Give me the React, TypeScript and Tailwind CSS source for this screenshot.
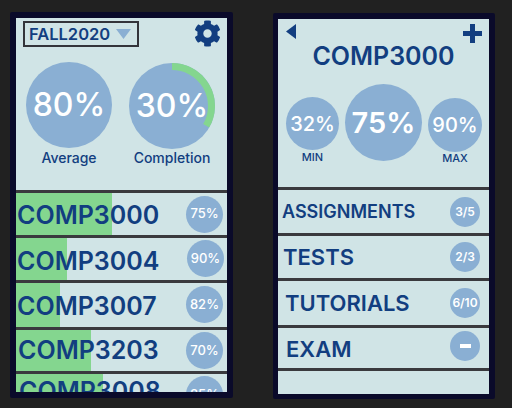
import { FaCog } from "react-icons/fa";

const font = "font-['Inter','Liberation_Sans',sans-serif]";

const courses = [
  { name: "COMP3000", pct: "75%", green: "w-[96px]", h: "h-[42px]", pl: "pl-[1px]", nudge: "pt-[2px]", cm: "mb-0", pr: "pr-[4px]" },
  { name: "COMP3004", pct: "90%", green: "w-[51px]", h: "h-[42px]", pl: "pl-[1px]", nudge: "pt-[4px]", cm: "mb-[1px]", pr: "pr-[3px]" },
  { name: "COMP3007", pct: "82%", green: "w-[44px]", h: "h-[44px]", pl: "pl-[1px]", nudge: "pt-[2px]", cm: "mb-[1px]", pr: "pr-[4px]" },
  { name: "COMP3203", pct: "70%", green: "w-[75px]", h: "h-[41px]", pl: "pl-[2px]", nudge: "pt-0", cm: "mb-0", pr: "pr-[4px]" },
];

const parts = [
  { name: "ASSIGNMENTS", val: "3/5", text: "text-[18px]", h: "h-[43px]", pl: "pl-[4px]", cm: "mt-0", nudge: "pt-0" },
  { name: "TESTS", val: "2/3", text: "text-[22px]", h: "h-[42px]", pl: "pl-[5px]", cm: "mt-0", nudge: "pt-0" },
  { name: "TUTORIALS", val: "6/10", text: "text-[22px]", h: "h-[44px]", pl: "pl-[7px]", cm: "mt-0", nudge: "pb-[1px]" },
  { name: "EXAM", val: "", text: "text-[22px]", h: "h-[40px]", pl: "pl-[8px]", cm: "-mt-[4px]", nudge: "pt-[1px]" },
];

function Circle({ size, text, children }: { size: string; text: string; children: React.ReactNode }) {
  return (
    <div className={`${size} ${text} rounded-full bg-[#8aafd3] text-white flex items-center justify-center shrink-0`}>
      {children}
    </div>
  );
}

export default function App() {
  return (
    <div className={`${font} w-[512px] h-[408px] overflow-hidden bg-[#212121] flex items-start pl-[10px] pt-[12px]`}>
      {/* left phone */}
      <div className="w-[223px] h-[386px] rounded-[2px] bg-[#0a0a2a] px-[6px] pt-[6px]">
        <div className="w-[211px] h-[374px] bg-[#d0e4e6] overflow-hidden flex flex-col">
          <div className="flex items-start justify-between pl-[7px] pr-[6px] pt-[3px] h-[44px]">
            <div className="w-[116px] h-[26px] border-2 border-[#33343a] flex items-center pl-[4px] gap-[6px]">
              <span className="text-[16.5px] leading-none font-semibold text-[#123e80]">FALL2020</span>
              <svg width="15" height="10" viewBox="0 0 15 10"><path d="M0 0H15L7.5 10Z" fill="#8aafd3" /></svg>
            </div>
            <FaCog className="text-[27px] text-[#123e80] mt-[-1px]" />
          </div>
          <div className="flex pl-[10px] gap-[17px] h-[128px]">
            <div className="flex flex-col items-center w-[86px]">
              <Circle size="w-[86px] h-[86px]" text="text-[32px] font-medium">80%</Circle>
              <span className="text-[14px] leading-none mt-[3px] text-[#123e80] font-medium">Average</span>
            </div>
            <div className="flex flex-col items-center w-[86px] mt-[1px]">
              <div className="relative">
                <Circle size="w-[86px] h-[86px]" text="text-[32px] font-medium">30%</Circle>
                <svg className="absolute inset-0" width="86" height="86" viewBox="0 0 86 86">
                  <path d="M43 3.5A39.5 39.5 0 0 1 77.2 62.75" fill="none" stroke="#84d68f" strokeWidth="7" />
                </svg>
              </div>
              <span className="text-[14px] leading-none mt-[2px] text-[#123e80] font-medium">Completion</span>
            </div>
          </div>
          {courses.map((c) => (
            <div key={c.name} className="border-t-[3px] border-[#3a3a3e]">
              <div className={`${c.h} relative flex items-center justify-between ${c.pl} ${c.pr}`}>
                <div className={`absolute left-0 top-0 bottom-0 ${c.green} bg-[#84d68f]`} />
                <span className={`relative text-[25px] leading-none font-semibold text-[#123e80] ${c.nudge}`}>{c.name}</span>
                <div className={`relative ${c.cm}`}>
                  <Circle size="w-[37px] h-[37px]" text="text-[13px] font-medium">{c.pct}</Circle>
                </div>
              </div>
            </div>
          ))}
          <div className="border-t-[3px] border-[#3a3a3e] flex-1 relative flex justify-between items-start pl-[3px] pr-[4px] overflow-hidden">
            <div className="absolute left-0 top-0 bottom-0 w-[87px] bg-[#84d68f]" />
            <span className="relative text-[25px] leading-none font-semibold text-[#123e80] pt-[5px]">COMP3008</span>
            <div className="relative mt-[2px]">
              <Circle size="w-[37px] h-[37px]" text="text-[13px] font-medium">85%</Circle>
            </div>
          </div>
        </div>
      </div>

      {/* right phone */}
      <div className="ml-[40px] mt-[1px] w-[222px] h-[386px] rounded-[2px] bg-[#0a0a2a] pl-[5px] pt-[6px]">
        <div className="w-[211px] h-[375px] bg-[#d0e4e6] overflow-hidden flex flex-col">
          <div className="flex items-start justify-between pl-[8px] pr-[7px] pt-[5px] h-[24px]">
            <svg width="10" height="15" viewBox="0 0 10 15"><path d="M10 0V15L0 7.5Z" fill="#123e80" /></svg>
            <svg width="19" height="19" viewBox="0 0 19 19"><path d="M7 0H12V7H19V12H12V19H7V12H0V7H7Z" fill="#123e80" /></svg>
          </div>
          <div className="text-center text-[25px] leading-none font-semibold text-[#123e80] mt-[1px]">COMP3000</div>
          <div className="flex pl-[8px] gap-[6px] mt-[15px] h-[103px]">
            <div className="flex flex-col items-center w-[53px] mt-[13px]">
              <Circle size="w-[53px] h-[53px]" text="text-[20px] font-medium">32%</Circle>
              <span className="text-[11px] leading-none mt-[2px] text-[#123e80] font-medium">MIN</span>
            </div>
            <Circle size="w-[77px] h-[77px]" text="text-[29px] font-semibold">75%</Circle>
            <div className="flex flex-col items-center w-[54px] mt-[14px]">
              <Circle size="w-[54px] h-[54px]" text="text-[20px] font-medium">90%</Circle>
              <span className="text-[11px] leading-none mt-[1px] text-[#123e80] font-medium">MAX</span>
            </div>
          </div>
          {parts.map((p) => (
            <div key={p.name} className="border-t-[3px] border-[#3a3a3e]">
              <div className={`${p.h} flex items-center justify-between ${p.pl} pr-[9px]`}>
                <span className={`${p.text} leading-none font-semibold text-[#123e80] ${p.nudge}`}>{p.name}</span>
                <div className={p.cm}>
                  <Circle size="w-[30px] h-[30px]" text="text-[12px] font-semibold">
                    {p.val || <span className="block w-[11px] h-[4px] bg-white" />}
                  </Circle>
                </div>
              </div>
            </div>
          ))}
          <div className="border-t-[3px] border-[#3a3a3e] flex-1" />
        </div>
      </div>
    </div>
  );
}
